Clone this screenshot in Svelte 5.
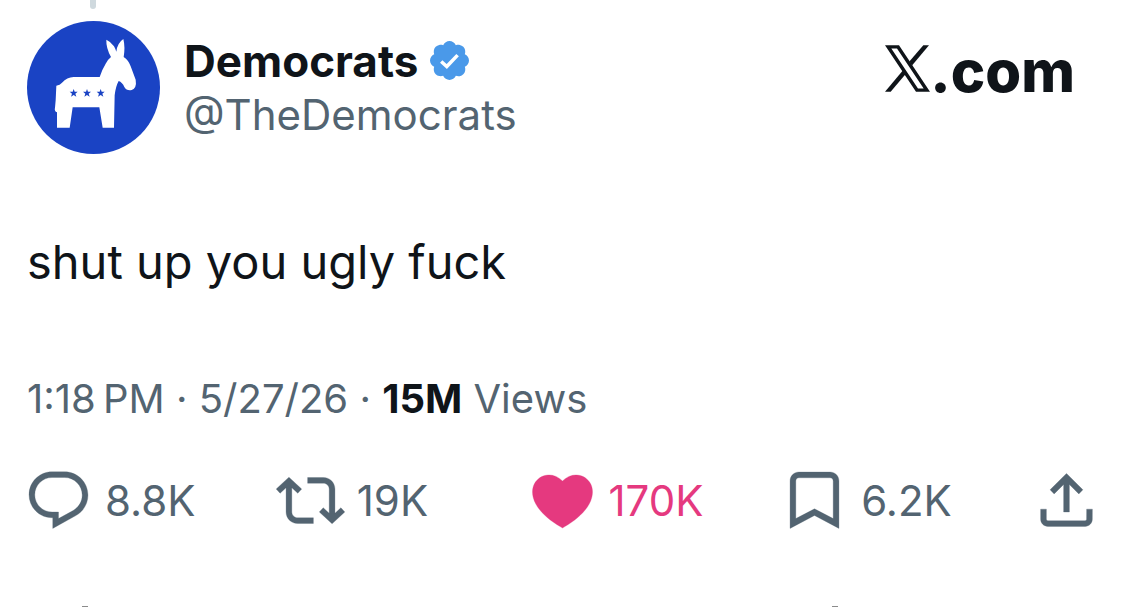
<script lang="ts">
	interface Action {
		name: string;
		count: string;
		path: string;
		viewBox?: string;
	}

	const actions: Action[] = [
		{
			name: 'reply',
			count: '8.8K',
			path: 'M1.751 10c0-4.42 3.584-8 8.005-8h4.366c4.49 0 8.129 3.64 8.129 8.13 0 2.96-1.607 5.68-4.196 7.11l-8.054 4.46v-3.69h-.067c-4.49.1-8.183-3.51-8.183-8.01zm8.005-6c-3.317 0-6.005 2.69-6.005 6 0 3.37 2.77 6.08 6.138 6.01l.351-.01h1.761v2.3l5.087-2.81c1.951-1.08 3.163-3.13 3.163-5.36 0-3.39-2.744-6.13-6.129-6.13H9.756z'
		},
		{
			name: 'repost',
			count: '19K',
			path: 'M4.5 3.88l4.432 4.14-1.364 1.46L5.5 7.55V16c0 1.1.896 2 2 2H13v2H7.5c-2.209 0-4-1.79-4-4V7.55L1.432 9.48.068 8.02 4.5 3.88zM16.5 6H11V4h5.5c2.209 0 4 1.79 4 4v8.45l2.068-1.93 1.364 1.46-4.432 4.14-4.432-4.14 1.364-1.46 2.068 1.93V8c0-1.1-.896-2-2-2z'
		},
		{
			name: 'like',
			count: '170K',
			viewBox: '0.5 0.5 23 23',
			path: 'M20.884 13.19c-1.351 2.48-4.001 5.12-8.379 7.67l-.503.3-.504-.3c-4.379-2.55-7.029-5.19-8.382-7.67-1.36-2.5-1.41-4.86-.514-6.67.887-1.79 2.647-2.91 4.601-3.01 1.651-.09 3.368.56 4.798 2.01 1.429-1.45 3.146-2.1 4.796-2.01 1.954.1 3.714 1.22 4.601 3.01.896 1.81.846 4.17-.514 6.67z'
		},
		{
			name: 'bookmark',
			count: '6.2K',
			path: 'M3.5 5.2C3.5 3.4 4.9 2.1 6.6 2.1h10.8c1.7 0 3.1 1.3 3.1 3.1v16.5L12 17.2l-8.5 4.5zM6.6 4.1c-.7 0-1.1.5-1.1 1.1v13.1L12 14.9l6.5 3.4V5.2c0-.6-.4-1.1-1.1-1.1z'
		},
		{
			name: 'share',
			count: '',
			path: 'M12 2.59l5.7 5.7-1.41 1.42L13 6.41V16h-2V6.41l-3.3 3.3-1.41-1.42L12 2.59zM21 15l-.02 3.51c0 1.38-1.12 2.49-2.5 2.49H5.5C4.11 21 3 19.88 3 18.5V15h2v3.5c0 .28.22.5.5.5h12.98c.28 0 .5-.22.5-.5L19 15h2z'
		}
	];

	const stars = [192, 232, 273];
</script>

<article class="post">
	<div class="thread-line"></div>

	<header class="header">
		<svg class="avatar" viewBox="52 62 399 399" aria-hidden="true">
			<circle cx="251.5" cy="261.5" r="199.5" fill="#1a43c4" />
			<path
				fill="#fff"
				d="M140 256Q151 254 157 247Q172 231 192 230H270Q277 208 288 190Q296 176 304 170Q289 143 290 118Q304 124 313 138Q318 147 320 154Q323 128 341 116Q347 140 342 170Q357 180 363 198L378 238Q382 263 366 269Q351 272 344 260Q338 246 327 242Q318 258 315 285L313 382H279L269 321H189L180 382H142V336Q133 332 136 322L138 300Z"
			/>
			{#each stars as x}
				<path
					fill="#1a43c4"
					transform="translate({x} 278)"
					d="M0-12L3-4H12L5 2L8 11L0 6L-8 11L-5 2L-12-4H-3Z"
				/>
			{/each}
		</svg>

		<div class="author">
			<div class="name-row">
				<span class="name">Democrats</span>
				<svg class="badge" viewBox="1.6 1.6 18.8 18.8" aria-hidden="true">
					<path
						fill="#4a99e9"
						d="M20.396 11c-.018-.646-.215-1.275-.57-1.816-.354-.54-.852-.972-1.438-1.246.223-.607.27-1.264.14-1.897-.131-.634-.437-1.218-.882-1.687-.47-.445-1.053-.75-1.687-.882-.633-.13-1.29-.083-1.897.14-.273-.587-.704-1.086-1.245-1.44S11.647 1.62 11 1.604c-.646.017-1.273.213-1.813.568s-.969.854-1.24 1.44c-.608-.223-1.267-.272-1.902-.14-.635.13-1.22.436-1.69.882-.445.47-.749 1.055-.878 1.688-.13.633-.08 1.29.144 1.896-.587.274-1.087.705-1.443 1.245-.356.54-.555 1.17-.574 1.817.02.647.218 1.276.574 1.817.356.54.856.972 1.443 1.245-.224.606-.274 1.263-.144 1.896.13.634.433 1.218.877 1.688.47.443 1.054.747 1.687.878.633.132 1.29.084 1.897-.136.274.586.705 1.084 1.246 1.439.54.354 1.17.551 1.816.569.647-.016 1.276-.213 1.817-.567s.972-.854 1.245-1.44c.604.239 1.266.296 1.903.164.636-.132 1.22-.447 1.68-.907.46-.46.776-1.044.908-1.681s.075-1.299-.165-1.903c.586-.274 1.084-.705 1.439-1.246.354-.54.551-1.17.569-1.816z"
					/>
					<path d="M7 11.5L9.7 13.9L14.9 8.4" fill="none" stroke="#fff" stroke-width="1.7" />
				</svg>
			</div>
			<span class="handle">@TheDemocrats</span>
		</div>

		<div class="brand">
			<svg class="brand-mark" viewBox="0 0 135 140" role="img" aria-label="X">
				<path fill-rule="evenodd" d="M0 0H42L135 140H93ZM19 10L99 130H116L36 10Z" />
				<path d="M115 0H132L81 61L73 49Z" />
				<path d="M0 140H17L64 84L56 73Z" />
			</svg>
			<span>.com</span>
		</div>
	</header>

	<p class="body">shut up you ugly fuck</p>

	<p class="meta">1:18&#8239;PM · 5/27/26 · <strong>15M</strong> Views</p>

	<div class="actions">
		{#each actions as action}
			<button class="action {action.name}" type="button" aria-label={action.name}>
				<svg viewBox={action.viewBox ?? '0 0 24 24'} aria-hidden="true">
					<path d={action.path} />
				</svg>
				{#if action.count}
					<span>{action.count}</span>
				{/if}
			</button>
		{/each}
	</div>

	<div class="next-post">
		<span></span>
		<span></span>
	</div>
</article>

<style>
	:global(body) {
		margin: 0;
		background: #fff;
	}

	.post {
		color: #0f1419;
		font-family: Inter, 'Liberation Sans', sans-serif;
	}

	.thread-line {
		width: 6px;
		height: 9px;
		margin-left: 90px;
		border-radius: 0 0 3px 3px;
		background: #cfd9de;
	}

	.header {
		display: flex;
		align-items: center;
		padding: 12px 50px 0 27px;
	}

	.avatar {
		flex: none;
		width: 133px;
		height: 133px;
		margin-right: 24px;
	}

	.author {
		display: flex;
		flex-direction: column;
		font-size: 42px;
		line-height: 54px;
	}

	.name-row {
		display: flex;
		align-items: center;
		gap: 12px;
	}

	.name {
		font-size: 44px;
		font-weight: 700;
	}

	.badge {
		width: 39px;
		height: 39px;
	}

	.handle {
		color: #536471;
	}

	.brand {
		display: flex;
		align-self: flex-start;
		align-items: baseline;
		margin: 14px 0 0 auto;
		font-size: 58px;
		font-weight: 800;
		line-height: 72px;
	}

	.brand-mark {
		width: 45px;
		height: 47px;
		fill: #0f1419;
	}

	.body {
		margin: 76px 27px 0;
		font-size: 47px;
		line-height: 64px;
	}

	.meta {
		margin: 78px 27px 0;
		color: #536471;
		font-size: 40px;
		line-height: 54px;
	}

	.meta strong {
		color: #0f1419;
		font-weight: 700;
	}

	.actions {
		display: grid;
		grid-template-columns: 252fr 252fr 253fr 252fr auto;
		margin: 40px 24px 0;
	}

	.action {
		display: flex;
		align-items: center;
		gap: 12px;
		padding: 0;
		border: 0;
		background: none;
		color: #536471;
		font: inherit;
		font-size: 42px;
		line-height: 54px;
		cursor: pointer;
	}

	.action svg {
		flex: none;
		width: 69px;
		height: 69px;
		fill: currentColor;
		stroke: currentColor;
		stroke-width: 0.1;
	}

	.action.like {
		color: #e5397f;
	}

	.next-post {
		display: flex;
		justify-content: space-between;
		margin: 71px 287px 0 82px;
	}

	.next-post span {
		width: 6px;
		height: 1px;
		background: #8b8b8b;
	}
</style>
